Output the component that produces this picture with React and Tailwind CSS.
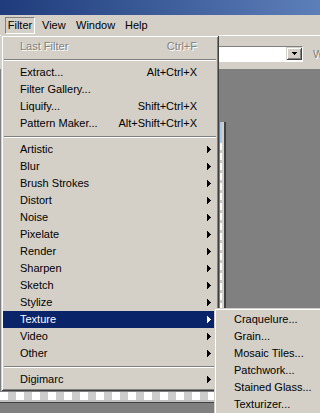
const filterItems = [
  { type: "item", label: "Last Filter", shortcut: "Ctrl+F", disabled: true },
  { type: "sep" },
  { type: "item", label: "Extract...", shortcut: "Alt+Ctrl+X" },
  { type: "item", label: "Filter Gallery..." },
  { type: "item", label: "Liquify...", shortcut: "Shift+Ctrl+X" },
  { type: "item", label: "Pattern Maker...", shortcut: "Alt+Shift+Ctrl+X" },
  { type: "sep" },
  { type: "item", label: "Artistic", sub: true },
  { type: "item", label: "Blur", sub: true },
  { type: "item", label: "Brush Strokes", sub: true },
  { type: "item", label: "Distort", sub: true },
  { type: "item", label: "Noise", sub: true },
  { type: "item", label: "Pixelate", sub: true },
  { type: "item", label: "Render", sub: true },
  { type: "item", label: "Sharpen", sub: true },
  { type: "item", label: "Sketch", sub: true },
  { type: "item", label: "Stylize", sub: true },
  { type: "item", label: "Texture", sub: true, active: true },
  { type: "item", label: "Video", sub: true },
  { type: "item", label: "Other", sub: true },
  { type: "sep" },
  { type: "item", label: "Digimarc", sub: true },
];

const textureItems = [
  "Craquelure...",
  "Grain...",
  "Mosaic Tiles...",
  "Patchwork...",
  "Stained Glass...",
  "Texturizer...",
];

const raised =
  "shadow-[inset_1px_1px_0_#d4d0c8,inset_-1px_-1px_0_#404040,inset_2px_2px_0_#ffffff,inset_-2px_-2px_0_#808080]";

function Arrow({ color }) {
  return (
    <svg width="4" height="7" viewBox="0 0 4 7" className="block" fill={color}>
      <rect x="0" y="0" width="1" height="7" />
      <rect x="1" y="1" width="1" height="5" />
      <rect x="2" y="2" width="1" height="3" />
      <rect x="3" y="3" width="1" height="1" />
    </svg>
  );
}

function MenuRow({ item }) {
  if (item.type === "sep") {
    return (
      <div className="h-[9px] pt-[4px] px-[1px]">
        <div className="h-[2px] border-t border-[#808080] border-b border-b-white" />
      </div>
    );
  }
  const disabled = item.disabled;
  const active = item.active;
  return (
    <div
      className={
        "h-[17px] flex items-center pl-[17px] " +
        (active ? "bg-[#0a246a] text-white" : "text-black")
      }
    >
      <span
        className={
          "flex-1 whitespace-nowrap " +
          (disabled ? "text-[#808080] [text-shadow:1px_1px_0_#ffffff]" : "")
        }
      >
        {item.label}
      </span>
      {item.shortcut && (
        <span
          className={
            "mr-[20px] whitespace-nowrap " +
            (disabled ? "text-[#808080] [text-shadow:1px_1px_0_#ffffff]" : "")
          }
        >
          {item.shortcut}
        </span>
      )}
      {item.sub && (
        <span className="mr-[6px]">
          <Arrow color={active ? "#ffffff" : "#000000"} />
        </span>
      )}
    </div>
  );
}

export default function App() {
  return (
    <div className="relative w-[320px] h-[413px] overflow-hidden flex flex-col bg-[#808080] font-['Liberation_Sans',Arial,sans-serif] text-[11px] leading-none">
      {/* title bar */}
      <div className="h-[15px] shrink-0 bg-gradient-to-r from-[#1f3b7b] to-[#5d7fb9]" />

      {/* menu bar */}
      <div className="h-[20px] shrink-0 bg-[#d4d0c8] flex items-center pl-[5px] text-black">
        <div className="w-[30px] h-[17px] flex items-center justify-center border border-t-[#808080] border-l-[#808080] border-b-white border-r-white">
          Filter
        </div>
        <div className="w-[34px] pl-[7px]">View</div>
        <div className="w-[49px] pl-[7px]">Window</div>
        <div className="pl-[7px]">Help</div>
      </div>

      {/* options toolbar */}
      <div className="h-[35px] shrink-0 bg-[#d4d0c8] border-t border-white border-b border-b-[#808080] flex items-start pt-[10px] pl-[200px] overflow-hidden">
        <div className="w-[103px] h-[16px] shrink-0 bg-white flex justify-end border-t border-l border-t-[#808080] border-l-[#808080] border-b border-r border-b-white border-r-white">
          <div className={"w-[16px] h-[13px] bg-[#d4d0c8] flex items-center justify-center " + raised}>
            <svg width="5" height="3" viewBox="0 0 5 3" fill="#000">
              <rect x="0" y="0" width="5" height="1" />
              <rect x="1" y="1" width="3" height="1" />
              <rect x="2" y="2" width="1" height="1" />
            </svg>
          </div>
        </div>
        <div className="ml-[10px] mt-[3px] shrink-0 whitespace-nowrap text-[#808080] [text-shadow:1px_1px_0_#ffffff]">
          W
        </div>
      </div>

      {/* workspace */}
      <div className="flex-1 flex flex-col">
        <div className="h-[322px] shrink-0 pl-[220px] pt-[52px]">
          <div className="h-[270px] w-[6px] flex">
            <div className="w-[2px] flex flex-col">
              <div className="h-[21px] bg-[#a6caf0]" />
              <div className="flex-1 bg-[repeating-linear-gradient(#ffffff_0_7px,#c8c8c8_7px_10px)]" />
            </div>
            <div className="w-[2px] bg-[#d4d0c8]" />
            <div className="w-[2px] bg-[#404040]" />
          </div>
        </div>
        <div className="h-[8px] w-[222px] shrink-0 bg-[repeating-conic-gradient(#cccccc_0_25%,#ffffff_0_50%)] bg-[length:16px_16px]" />
        <div className="h-[2px] w-[222px] shrink-0 bg-[#c0c0c0]" />
        <div className="h-[1px] w-[222px] shrink-0 bg-[#404040]" />
      </div>

      {/* Filter menu */}
      <div className={"absolute left-[1px] top-[35px] w-[218px] bg-[#d4d0c8] px-[2px] pt-[3px] pb-[3px] " + raised}>
        {filterItems.map((item, i) => (
          <MenuRow key={i} item={item} />
        ))}
      </div>

      {/* Texture submenu */}
      <div className={"absolute left-[214px] top-[308px] w-[120px] h-[120px] bg-[#d4d0c8] px-[2px] pt-[3px] " + raised}>
        {textureItems.map((label) => (
          <div key={label} className="h-[17px] flex items-center pl-[18px] text-black whitespace-nowrap">
            {label}
          </div>
        ))}
      </div>
    </div>
  );
}
